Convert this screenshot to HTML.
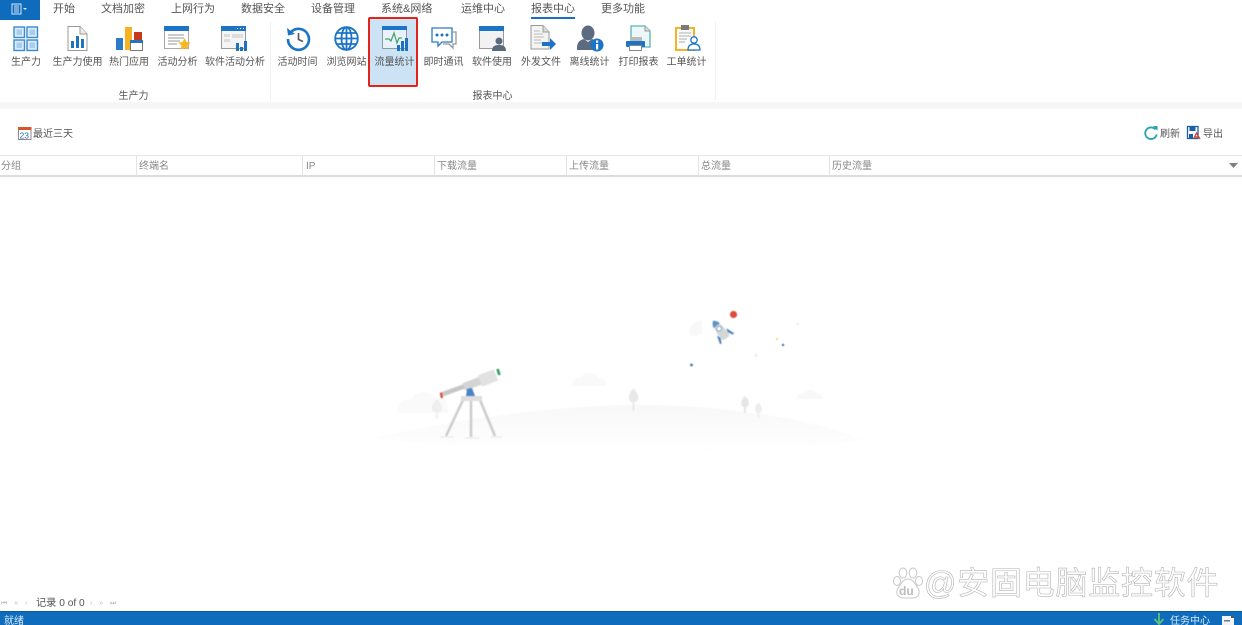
<!DOCTYPE html>
<html lang="zh"><head><meta charset="utf-8"><title>流量统计</title>
<style>
html,body{margin:0;padding:0;background:#fff}
#p{position:relative;width:1242px;height:625px;overflow:hidden;background:#fff;font-family:"Liberation Sans","Noto Sans CJK SC",sans-serif;color:#555;filter:blur(.3px)}
.t{position:absolute;white-space:nowrap;line-height:14px}
.tab{top:2px;font-size:11px;color:#555}
.l{top:56px;font-size:10px;color:#555;transform:translateX(-50%)}
.h{top:160px;font-size:10px;color:#888}
.s{position:absolute;top:156px;width:1px;height:20px;background:#e3e3e3}
svg{position:absolute;overflow:visible}
</style></head><body><div id="p">
<div style="position:absolute;left:0;top:0;width:40px;height:20px;background:#0f6cbd"></div>
<svg style="left:11px;top:3px" width="18" height="12"><rect x="1" y="1" width="9" height="10" fill="none" stroke="#d5e6f6"/><path d="M3 3h5M3 5h5M3 7h5M3 9h5" stroke="#d5e6f6"/><path d="M12 5h4l-2 2z" fill="#d5e6f6"/></svg>
<div class="t tab" style="left:53px">开始</div>
<div class="t tab" style="left:101px">文档加密</div>
<div class="t tab" style="left:171px">上网行为</div>
<div class="t tab" style="left:241px">数据安全</div>
<div class="t tab" style="left:311px">设备管理</div>
<div class="t tab" style="left:381px">系统&amp;网络</div>
<div class="t tab" style="left:461px">运维中心</div>
<div class="t tab" style="left:531px">报表中心</div>
<div class="t tab" style="left:601px">更多功能</div>
<div style="position:absolute;left:531px;top:17px;width:44px;height:2px;background:#1b6fc2"></div>

<div style="position:absolute;left:0;top:102px;width:1242px;height:7px;background:#f6f6f6"></div>
<div style="position:absolute;left:270px;top:22px;width:1px;height:78px;background:#f0f0f0"></div>
<div style="position:absolute;left:715px;top:22px;width:1px;height:78px;background:#f0f0f0"></div>

<div style="position:absolute;left:368px;top:17px;width:46px;height:66px;background:#cce2f5;border:2px solid #e2231a;border-radius:2px"></div>

<!-- 生产力 -->
<svg style="left:13px;top:26px" width="25" height="25"><g fill="#dcebf8" stroke="#3a8bd0" stroke-width="1.400"><rect x="1" y="1" width="10.500" height="10.500"/><rect x="14" y="1" width="10.500" height="10.500"/><rect x="1" y="14" width="10.500" height="10.500"/><rect x="14" y="14" width="10.500" height="10.500"/></g><g fill="#a9cdec"><rect x="3.500" y="3.500" width="5.500" height="5.500"/><rect x="16.500" y="3.500" width="5.500" height="5.500"/><rect x="3.500" y="16.500" width="5.500" height="5.500"/><rect x="16.500" y="16.500" width="5.500" height="5.500"/></g></svg>
<!-- 生产力使用 -->
<svg style="left:67px;top:26px" width="21" height="25"><path d="M1 .5H13L20 8V24.500H1Z" fill="#fff" stroke="#9a9a9a"/><path d="M13 .5V8H20" fill="#eee" stroke="#9a9a9a"/><path d="M4 15h3v7H4zM9 10h3v12H9zM14 13h3v9h-3z" fill="#1f72bd"/></svg>
<!-- 热门应用 -->
<svg style="left:116px;top:26px" width="27" height="25"><rect x="0" y="12" width="7" height="12" fill="#2b7cc8"/><rect x="9" y="1" width="7" height="23" fill="#f5b323"/><rect x="18" y="6" width="8" height="8" fill="#c9371f"/><rect x="14.500" y="14.500" width="12" height="10" fill="#fff" stroke="#777"/><rect x="14" y="14" width="13" height="3" fill="#2474bd"/></svg>
<!-- 活动分析 -->
<svg style="left:164px;top:26px" width="28" height="26"><rect x=".5" y=".5" width="24" height="22" fill="#fff" stroke="#aaa"/><rect x="0" y="0" width="25" height="5" fill="#1b74c5"/><path d="M4 9h16M4 12h16M4 15h12M4 18h9" stroke="#999"/><path d="M20.500 12l1.900 4 4.300.5-3.200 3 .9 4.300-3.900-2.200-3.900 2.200.9-4.300-3.200-3 4.300-.5z" fill="#f6b71f"/></svg>
<!-- 软件活动分析 -->
<svg style="left:221px;top:26px" width="27" height="26"><rect x=".5" y=".5" width="24" height="22" fill="#f5f5f5" stroke="#999"/><rect x="0" y="0" width="25" height="5" fill="#1b74c5"/><path d="M16 2.500h1M19 2.500h1M22 2.500h1" stroke="#fff"/><path d="M3 8h6v3H3zM3 13h6v3H3zM11 8h11v4H11z" fill="#ddd"/><path d="M15 17h3v8h-3zM19 21h3v4h-3zM23 15h3v10h-3z" fill="#1f72bd"/></svg>
<!-- 活动时间 -->
<svg style="left:286px;top:26px" width="25" height="25" fill="none"><path d="M5.500 5.500A10.500 10.500 0 1 1 2 13" stroke="#1b74c5" stroke-width="2.600"/><path d="M1 2l1 7.500 7-1.500z" fill="#1b74c5"/><path d="M12.500 7v6.500l4.500 2" stroke="#555" stroke-width="1.600"/></svg>
<!-- 浏览网站 -->
<svg style="left:334px;top:26px" width="25" height="25" fill="none" stroke="#1b74c5" stroke-width="1.800"><circle cx="12.500" cy="12.500" r="11.300"/><ellipse cx="12.500" cy="12.500" rx="5" ry="11.300"/><path d="M12.500 1v23M1.500 12.500h22M3 7h19M3 18h19"/></svg>
<!-- 流量统计 -->
<svg style="left:382px;top:26px" width="27" height="26"><rect x=".5" y=".5" width="24" height="22" fill="#e9f2fa" stroke="#8a9aa8"/><rect x="0" y="0" width="25" height="4" fill="#1b74c5"/><path d="M3 13h4l2 2 3-8 3 10 2-5h3" fill="none" stroke="#4aa56a" stroke-width="1.300"/><path d="M15 19h3v6h-3zM19 15h3v10h-3zM23 12h3v13h-3z" fill="#1f72bd"/></svg>
<!-- 即时通讯 -->
<svg style="left:431px;top:27px" width="26" height="24" fill="#fff" stroke="#2a7cc4" stroke-width="1.300"><path d="M1 1h20v14H11l-4 4v-4H1z"/><path d="M22 5h3v12h-3v4l-4-4h-6" fill="none" stroke="#999"/><g fill="#1b74c5" stroke="none"><circle cx="6" cy="8" r="1.500"/><circle cx="11" cy="8" r="1.500"/><circle cx="16" cy="8" r="1.500"/></g></svg>
<!-- 软件使用 -->
<svg style="left:479px;top:26px" width="27" height="26"><rect x=".5" y=".5" width="24" height="22" fill="#f2f2f2" stroke="#999"/><rect x="0" y="0" width="25" height="5" fill="#1b74c5"/><circle cx="20" cy="15" r="3.500" fill="#5a6a7d"/><path d="M13 25c0-5 3-6 7-6s7 1 7 6z" fill="#5a6a7d"/></svg>
<!-- 外发文件 -->
<svg style="left:530px;top:25px" width="26" height="27"><path d="M1 .5H13L19 7V24H1Z" fill="#f4f4f4" stroke="#9a9a9a"/><path d="M13 .5V7H19" fill="#ddd" stroke="#9a9a9a"/><path d="M4 6h6M4 9h9M4 12h10M4 15h7M4 18h8" stroke="#bbb"/><path d="M12 17h8v-4l6 6-6 6v-4h-8z" fill="#1b74c5"/></svg>
<!-- 离线统计 -->
<svg style="left:577px;top:25px" width="27" height="27"><ellipse cx="11" cy="8" rx="6.500" ry="7.500" fill="#5c6b80"/><path d="M0 23c0-6 3-8 7-9l4 3 4-3c3 1 5 3 6 5l-3 6H0z" fill="#5c6b80"/><circle cx="20" cy="20" r="6.500" fill="#1b74c5"/><rect x="19" y="19" width="2.200" height="5.500" fill="#fff"/><rect x="19" y="15.500" width="2.200" height="2.200" fill="#fff"/></svg>
<!-- 打印报表 -->
<svg style="left:626px;top:25px" width="26" height="27"><path d="M5 1H19L24 6V22H5Z" fill="#eef7f7" stroke="#58b4b4" stroke-width="1.300"/><path d="M19 1V6H24" fill="#ddd" stroke="#999"/><rect x="4" y="12" width="12" height="4" fill="#bbb"/><rect x="0" y="16" width="19" height="6" rx="1" fill="#1b74c5"/><rect x="3.500" y="20.500" width="12" height="5" fill="#fff" stroke="#888"/></svg>
<!-- 工单统计 -->
<svg style="left:675px;top:25px" width="26" height="27"><rect x="1" y="3" width="18" height="22" fill="#fff" stroke="#f5b323" stroke-width="2"/><rect x="6" y="0" width="8" height="5" fill="#7a7a7a"/><path d="M4 8h12M4 11h12M4 14h8M4 17h6" stroke="#aaa"/><circle cx="19" cy="15" r="3.200" fill="#fff" stroke="#1b74c5" stroke-width="1.300"/><path d="M13 25c0-4 2-6 6-6s6 2 6 6z" fill="#fff" stroke="#1b74c5" stroke-width="1.300"/></svg>

<div class="t l" style="left:26px">生产力</div>
<div class="t l" style="left:77.500px">生产力使用</div>
<div class="t l" style="left:129px">热门应用</div>
<div class="t l" style="left:177.500px">活动分析</div>
<div class="t l" style="left:235px">软件活动分析</div>
<div class="t l" style="left:297.500px">活动时间</div>
<div class="t l" style="left:346.500px">浏览网站</div>
<div class="t l" style="left:394.500px">流量统计</div>
<div class="t l" style="left:443.500px">即时通讯</div>
<div class="t l" style="left:492px">软件使用</div>
<div class="t l" style="left:541px">外发文件</div>
<div class="t l" style="left:589.500px">离线统计</div>
<div class="t l" style="left:638.500px">打印报表</div>
<div class="t l" style="left:686.500px">工单统计</div>
<div class="t l" style="left:133.500px;top:90px">生产力</div>
<div class="t l" style="left:492.500px;top:90px">报表中心</div>

<!-- toolbar -->
<svg style="left:18px;top:126px" width="14" height="14"><rect x=".5" y="1.500" width="12.500" height="12" fill="#fff" stroke="#8a8a8a"/><rect x="0" y="1" width="13.500" height="3" fill="#d9532c"/><text x="1.500" y="12.500" font-size="8.500" fill="#2a6aa8" font-family="Liberation Sans">23</text></svg>
<div class="t" style="left:33px;top:128px;font-size:10px;color:#555">最近三天</div>
<svg style="left:1144px;top:126px" width="14" height="14" fill="none"><path d="M11.500 3.500A5.800 5.800 0 1 0 12.700 8.500" stroke="#27a3ad" stroke-width="1.800"/><path d="M9 0h4.500v4.800z" fill="#27a3ad"/></svg>
<div class="t" style="left:1160px;top:128px;font-size:10px;color:#555">刷新</div>
<svg style="left:1187px;top:126px" width="14" height="14"><rect x=".5" y=".5" width="10.500" height="12" fill="#fff" stroke="#1b5fa8" stroke-width="1.300"/><rect x="2.500" y="1" width="6" height="4" fill="#1b5fa8"/><rect x="2" y="8" width="4" height="4" fill="#1b5fa8"/><path d="M6.500 13l3-6 3.500 6M8 11h4" fill="none" stroke="#d8342a" stroke-width="1.200"/></svg>
<div class="t" style="left:1203px;top:128px;font-size:10px;color:#555">导出</div>

<!-- table header -->
<div style="position:absolute;left:0;top:155px;width:1242px;height:1px;background:#e6e6e6"></div>
<div style="position:absolute;left:0;top:175px;width:1242px;height:2px;background:#dcdcdc"></div>
<div class="s" style="left:136px"></div><div class="s" style="left:302px"></div><div class="s" style="left:434px"></div><div class="s" style="left:566px"></div><div class="s" style="left:698px"></div><div class="s" style="left:829px"></div>
<div class="t h" style="left:1px">分组</div>
<div class="t h" style="left:139px">终端名</div>
<div class="t h" style="left:306px">IP</div>
<div class="t h" style="left:437px">下载流量</div>
<div class="t h" style="left:569px">上传流量</div>
<div class="t h" style="left:701px">总流量</div>
<div class="t h" style="left:832px">历史流量</div>
<svg style="left:1229px;top:163px" width="9" height="5"><path d="M0 0h9L4.500 5z" fill="#808080"/></svg>

<!-- empty illustration -->
<svg style="left:370px;top:300px;filter:blur(.5px)" width="500" height="160">
<defs><linearGradient id="g" x1="0" y1="0" x2="0" y2="1"><stop offset="0" stop-color="#f8f8f8"/><stop offset="1" stop-color="#fff"/></linearGradient></defs>
<path d="M5 138C90 118 190 105 270 105C350 105 440 118 495 140C400 155 120 155 5 138Z" fill="url(#g)"/>
<path d="M28 113c-3-9 6-15 13-13 3-9 19-11 25-2 8-2 14 4 12 15z" fill="#fafafa"/>
<path d="M203 86c-2-6 4-9 8-8 3-7 14-7 18 0 5 0 8 4 7 8z" fill="#f9f9f9"/>
<path d="M427 99c-1-4 3-6 6-5 3-5 11-5 14 0 4 0 6 3 5 5z" fill="#f8f8f8"/>
<path d="M65 101c-3 4-5 9-1 11h2v7h2v-7h2c4-2 2-7-1-11-1-2-3-2-4 0z" fill="#efefef"/>
<path d="M262 90c-3 4-5 9-1 12h1.500v9h2v-9h1.500c4-3 2-8-1-12-1-1.500-2-1.500-3 0z" fill="#e8e8e8"/>
<path d="M374 97c-3 3-4 8-1 10h1v6h2v-6h1c3-2 2-7-1-10-.5-1-1.500-1-2 0z" fill="#e6e6e6"/>
<path d="M387 104c-2 3-3 7 0 9h.8v5h1.400v-5h.8c3-2 2-6 0-9-.5-1-2.500-1-3 0z" fill="#ededed"/>
<g fill="none">
<path d="M93 100L76 136M101 100V137M110 100L125 136" stroke="#cdcdcd" stroke-width="2.600"/>
<path d="M70 137h14M95 138h14M120 137h12" stroke="#ededed" stroke-width="1.500"/>
<path d="M73 94L98 85" stroke="#c6c6c6" stroke-width="4.500"/>
<path d="M94 87L115 79" stroke="#d4d4d4" stroke-width="8"/>
<path d="M110 81L126 75" stroke="#e2e2e2" stroke-width="12"/>
<path d="M71 92.500L72 98" stroke="#cf5a50" stroke-width="2.600"/>
<path d="M127.500 69L129.500 75" stroke="#2e9f5d" stroke-width="2.600"/>
</g>
<rect x="91" y="96" width="21" height="5" fill="#dedede"/>
<path d="M96 96l1-7 5-1 3 8z" fill="#4d82c9"/>
<circle cx="363.500" cy="14.500" r="3.600" fill="#e04a3e"/>
<path d="M332 20c-8 1-14 6-12 14 2 3 8 2 12-1z" fill="#f8f8f8"/>
<g transform="translate(351,31) rotate(-38)">
<path d="M0 -13C5 -8 5 2 4 9H-4C-5 2 -5 -8 0 -13Z" fill="#d6d6d6"/>
<path d="M0 -13C2.500 -11 3.500 -9 4 -7L-4 -7C-3.500 -9 -2.500 -11 0 -13Z" fill="#5a93c8"/>
<circle cx="0" cy="-3" r="2.400" fill="#fff" stroke="#7aa6d0"/>
<path d="M-6 2L-9 11H-7L-4.500 6ZM6 2L9 11H7L4.500 6Z" fill="#4f83bb" transform="translate(0,-1)"/>
</g>
<circle cx="321.500" cy="65" r="1.400" fill="#3d74b0"/>
<circle cx="413" cy="45" r="1.200" fill="#3d74b0"/>
<circle cx="407" cy="39" r="1.100" fill="#f2cf8a"/>
<circle cx="427.500" cy="24" r="1.500" fill="#eee"/>
<circle cx="386" cy="55.500" r="1.700" fill="#efefef"/>
</svg>

<!-- watermark -->
<svg style="left:892px;top:566px" width="32" height="34"><g fill="#fff" stroke="#c9c9c9" stroke-width="1"><ellipse cx="5" cy="15" rx="3.500" ry="4.500"/><ellipse cx="11" cy="7" rx="3.800" ry="5"/><ellipse cx="21" cy="7" rx="3.800" ry="5"/><ellipse cx="27" cy="15" rx="3.500" ry="4.500"/><path d="M16 13c5 0 7 5 10 9 3 5 0 10-5 10H11c-5 0-8-5-5-10 3-4 5-9 10-9z"/></g><text x="7" y="29" font-size="12" font-weight="bold" fill="#bbb" font-family="Liberation Sans">du</text></svg>
<div class="t" style="left:924px;top:565px;line-height:36px;font-size:32px;letter-spacing:.75px;color:#fff;-webkit-text-stroke:.6px #b4b4b4;width:300px;white-space:nowrap">@安固电脑监控软件</div>

<!-- pager -->
<div class="t" style="left:1px;top:597px;font-size:7px;color:#bbb;letter-spacing:1px">⏮ &nbsp;« &nbsp;‹</div>
<div class="t" style="left:36px;top:597px;font-size:10.200px;color:#555">记录 0 of 0</div>
<div class="t" style="left:90px;top:597px;font-size:7px;color:#bbb;letter-spacing:1px">› &nbsp;» &nbsp;⏭</div>

<!-- status bar -->
<div style="position:absolute;left:0;top:611px;width:1242px;height:14px;background:#0f6cbd;border-top:1px solid #0a5aa3;box-sizing:border-box"></div>
<div class="t" style="left:4px;top:615px;font-size:10px;color:#d8e8f6">就绪</div>
<svg style="left:1153px;top:613px" width="12" height="12"><path d="M6 0v10M1.500 6L6 11l4.500-5" fill="none" stroke="#5fc07a" stroke-width="1.800"/></svg>
<div class="t" style="left:1170px;top:615px;font-size:10px;color:#d8e8f6">任务中心</div>
<svg style="left:1222px;top:616px" width="13" height="10"><rect width="12" height="9" fill="#eef4fa"/><rect x="2" y="4" width="6" height="1.500" fill="#777"/><rect x="9" y="0" width="3" height="2" fill="#555"/></svg>
</div></body></html>
